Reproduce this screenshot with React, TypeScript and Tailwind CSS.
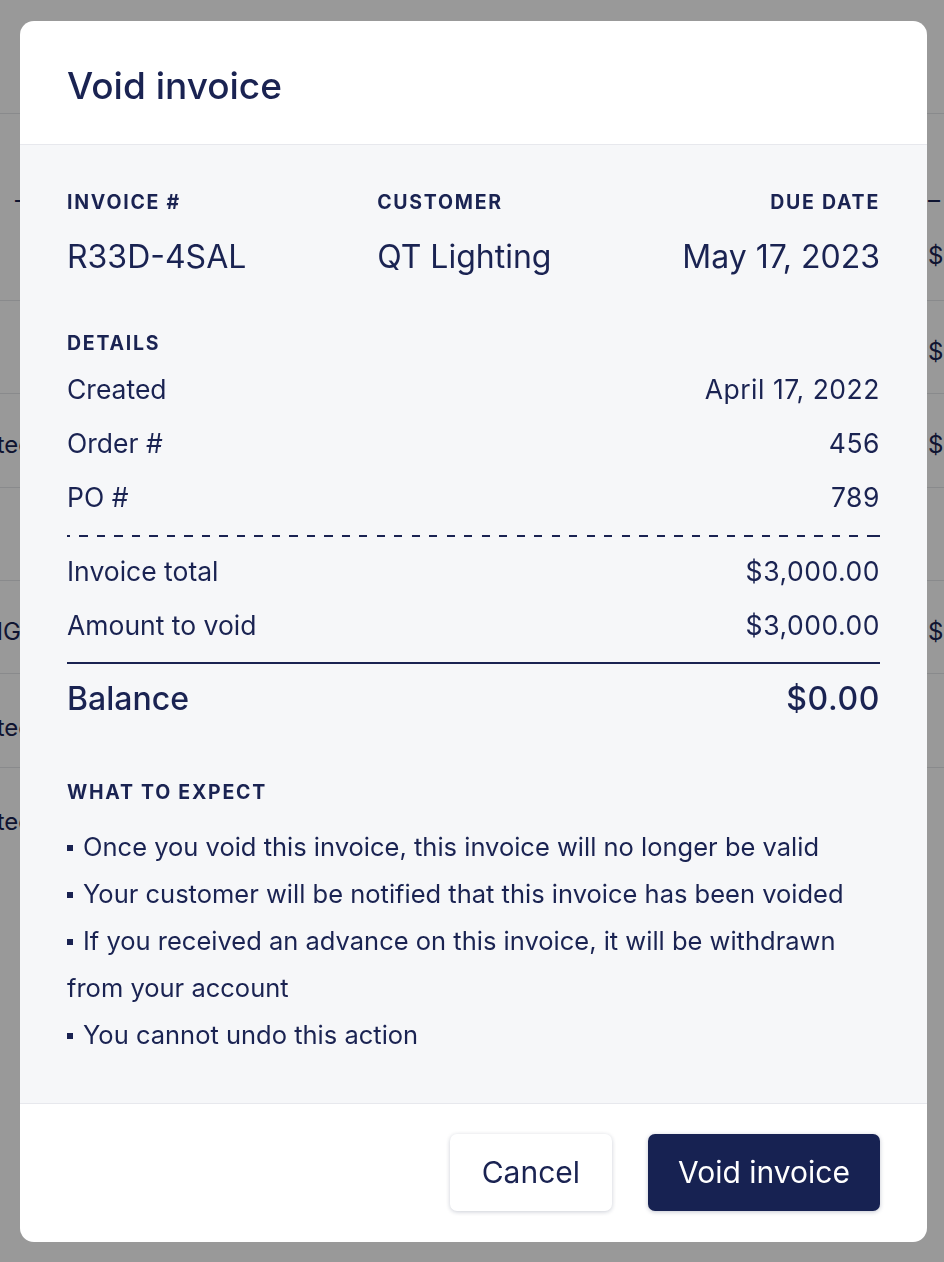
const ink = "text-[#1a2352]";

const bgRows = [
  { h: "h-[187px]", left: "–", right: "–", right2: "$1,200.00", pt: "pt-[68px]", lw: "w-[27px]" },
  { h: "h-[93px]", left: "", right: "$2,400.00", pt: "pt-[33px]", lw: "w-[27px]" },
  { h: "h-[94px]", left: "Created", right: "$1,850.00", pt: "pt-[33px]", lw: "w-[33px]" },
  { h: "h-[93px]", left: "", right: "", pt: "pt-[33px]", lw: "w-[27px]" },
  { h: "h-[93px]", left: "PENDING", right: "$3,000.00", pt: "pt-[33px]", lw: "w-[21px]" },
  { h: "h-[94px]", left: "Created", right: "", pt: "pt-[36px]", lw: "w-[33px]" },
  { h: "h-[93px]", left: "Created", right: "", pt: "pt-[36px]", lw: "w-[33px]" },
];

const details = [
  ["Created", "April 17, 2022"],
  ["Order #", "456"],
  ["PO #", "789"],
];

const expectations = [
  "Once you void this invoice, this invoice will no longer be valid",
  "Your customer will be notified that this invoice has been voided",
  "If you received an advance on this invoice, it will be withdrawn from your account",
  "You cannot undo this action",
];

function BackgroundTable() {
  return (
    <div className="min-h-[1262px] bg-white pt-[113px]">
      {bgRows.map((r, i) => (
        <div key={i} className={`flex justify-between border-t border-[#e4e6ea] ${r.h} ${r.pt} text-[24px] leading-[36px] ${ink}`}>
          <div className={`flex ${r.lw} justify-end overflow-hidden whitespace-nowrap`}>
            <span>{r.left}</span>
          </div>
          <div className="flex w-[16px] flex-col whitespace-nowrap">
            <span>{r.right}</span>
            {r.right2 && <span className="mt-[20px]">{r.right2}</span>}
          </div>
        </div>
      ))}
    </div>
  );
}

function Label({ children, className = "" }: { children: React.ReactNode; className?: string }) {
  return (
    <div className={`text-[19.5px] font-bold uppercase leading-[24px] tracking-[0.09em] ${ink} ${className}`}>
      {children}
    </div>
  );
}

function Row({ label, value, big = false }: { label: string; value: string; big?: boolean }) {
  return (
    <div className={`flex h-[54px] items-center justify-between ${ink} ${big ? "text-[32px] font-medium" : "text-[26.5px]"}`}>
      <span>{label}</span>
      <span className="tracking-[0.02em]">{value}</span>
    </div>
  );
}

function VoidInvoiceModal() {
  return (
    <div className="w-[907px] overflow-hidden rounded-[14px] bg-white">
      <div className="h-[124px] border-b border-[#e7e8ed] px-[47px] pt-[43px]">
        <h1 className={`text-[37px] font-medium leading-[44px] ${ink}`}>Void invoice</h1>
      </div>

      <div className="bg-[#f6f7f9] px-[47px] pt-[45px] pb-[45px]">
        <div className="flex justify-between">
          <div>
            <Label>Invoice #</Label>
            <div className={`mt-[23px] text-[32px] leading-[40px] ${ink}`}>R33D-4SAL</div>
          </div>
          <div>
            <Label>Customer</Label>
            <div className={`mt-[23px] text-[32px] leading-[40px] ${ink}`}>QT Lighting</div>
          </div>
          <div className="text-right">
            <Label>Due date</Label>
            <div className={`mt-[23px] text-[32px] leading-[40px] ${ink}`}>May 17, 2023</div>
          </div>
        </div>

        <Label className="mt-[54px]">Details</Label>
        <div className="mt-[8px]">
          {details.map(([l, v]) => (
            <Row key={l} label={l} value={v} />
          ))}
        </div>

        <div className="mt-[10px] h-[2px] bg-[repeating-linear-gradient(to_right,#1a2352_0_8px,transparent_8px_17.5px)] bg-[position:-5px_0]" />

        <div className="mt-[8px]">
          <Row label="Invoice total" value="$3,000.00" />
          <Row label="Amount to void" value="$3,000.00" />
        </div>
        <div className="mt-[9px] h-[2px] bg-[#1a2352]" />
        <div className="mt-[8px]">
          <Row label="Balance" value="$0.00" big />
        </div>

        <Label className="mt-[54px]">What to expect</Label>
        <ul className={`mt-[19px] text-[25.5px] leading-[47px] ${ink}`}>
          {expectations.map((t) => (
            <li key={t}>
              <span className="mr-[10px] mb-[5px] inline-block h-[6px] w-[6px] bg-[#1a2352]" />
              {t}
            </li>
          ))}
        </ul>
      </div>

      <div className="flex justify-end gap-[36px] border-t border-[#e7e8ed] px-[47px] pt-[30px] pb-[31px]">
        <button className={`h-[77px] rounded-[7px] bg-white px-8 text-[30px] shadow-[0_1px_4px_rgba(20,30,70,0.22)] ${ink}`}>
          Cancel
        </button>
        <button className="h-[77px] rounded-[7px] bg-[#172252] px-[30px] text-[30px] text-white shadow-[0_1px_4px_rgba(20,30,70,0.25)]">
          Void invoice
        </button>
      </div>
    </div>
  );
}

export default function App() {
  return (
    <div className="relative min-h-[1262px] overflow-hidden font-['Inter','Liberation_Sans',sans-serif]">
      <BackgroundTable />
      <div className="fixed inset-0 flex items-center justify-start bg-black/40 pl-[20px]">
        <VoidInvoiceModal />
      </div>
    </div>
  );
}
